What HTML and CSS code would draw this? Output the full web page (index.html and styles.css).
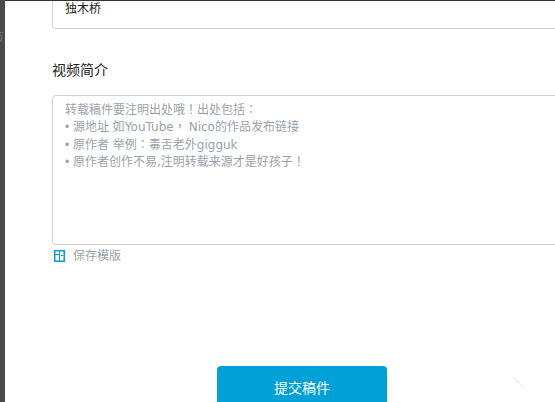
FILE: index.html
```html
<!DOCTYPE html>
<html lang="zh-TW">
<head>
    <meta charset="UTF-8">
    <meta name="viewport" content="width=device-width, initial-scale=1.0">
    <title>提交稿件</title>
    <link rel="stylesheet" href="styles.css">
</head>
<body>
    <div class="side-strip"><span class="side-text">方</span></div>
    <div class="panel">
        <div class="title-input">独木桥</div>

        <div class="field-label">视频简介</div>

        <div class="desc-box">
            <p>转载稿件要注明出处哦！出处包括：</p>
            <p><span class="dot">•</span> 源地址 如YouTube<span class="comma">，</span>Nico的作品发布链接</p>
            <p><span class="dot">•</span> 原作者 举例：毒舌老外gigguk</p>
            <p><span class="dot">•</span> 原作者创作不易,注明转载来源才是好孩子！</p>
        </div>

        <div class="save-row">
            <svg class="save-icon" width="11" height="12" viewBox="0 0 11 12">
                <rect width="11" height="12" fill="#00a1d6"/>
                <rect x="1.5" y="1.5" width="3.5" height="2.5" fill="#fff"/>
                <rect x="1.5" y="5" width="3.5" height="5.5" fill="#fff"/>
                <rect x="6" y="1.5" width="3.5" height="9" fill="#fff"/>
                <rect x="7" y="5" width="2.5" height="1" fill="#00a1d6"/>
            </svg>
            <span class="save-text">保存模版</span>
        </div>

        <div class="submit-wrap">
            <button class="submit-btn">提交稿件</button>
        </div>
    </div>
    <svg class="corner-mark" width="14" height="14" viewBox="0 0 14 14">
        <path d="M1 1 L13 13" stroke="#f3f5f6" stroke-width="2" fill="none"/>
    </svg>
</body>
</html>
```

FILE: styles.css
```css
* {
    margin: 0;
    padding: 0;
    box-sizing: border-box;
    font-family: "DejaVu Sans", "Noto Sans CJK TC", sans-serif;
}

html, body {
    height: 402px;
    overflow: hidden;
}

body {
    display: flex;
    background-color: #fff;
}

.side-strip {
    width: 5px;
    flex-shrink: 0;
    background-color: #4a4a4a;
    overflow: hidden;
}

.side-text {
    display: block;
    margin-top: 27px;
    margin-left: -8px;
    font-size: 12px;
    color: #777;
}

.panel {
    flex: 1;
    min-width: 0;
    border-top: 1px solid #333;
    padding-left: 47px;
    overflow: hidden;
}

.title-input {
    width: 520px;
    height: 29px;
    margin-top: -1px;
    padding: 0 12px;
    border: 1px solid #ccd0d7;
    border-top: none;
    border-radius: 0 0 4px 4px;
    font-size: 12px;
    line-height: 18px;
    color: #222;
}

.field-label {
    margin-top: 31px;
    font-size: 14px;
    line-height: 20px;
    color: #222;
}

.desc-box {
    width: 520px;
    height: 150px;
    margin-top: 15px;
    padding: 6px 12px 5px;
    border: 1px solid #ccd0d7;
    border-radius: 4px;
    font-size: 12px;
    line-height: 17.33px;
    color: #99a2aa;
}

.dot {
    font-family: "Liberation Sans", sans-serif;
}

.comma {
    margin-right: 3px;
}

.save-row {
    display: flex;
    align-items: center;
    height: 20px;
}

.save-icon {
    margin-left: 2px;
    margin-top: 2px;
    flex-shrink: 0;
}

.save-text {
    margin-left: 8px;
    margin-top: -2px;
    font-size: 12px;
    color: #99a2aa;
}

.submit-wrap {
    margin-top: 101px;
    padding-left: 165px;
}

.submit-btn {
    display: block;
    width: 170px;
    height: 42px;
    border: none;
    border-radius: 4px;
    background-color: #00a1d6;
    color: #fff;
    font-size: 14px;
}

.corner-mark {
    position: absolute;
    left: 512px;
    top: 376px;
}
```
